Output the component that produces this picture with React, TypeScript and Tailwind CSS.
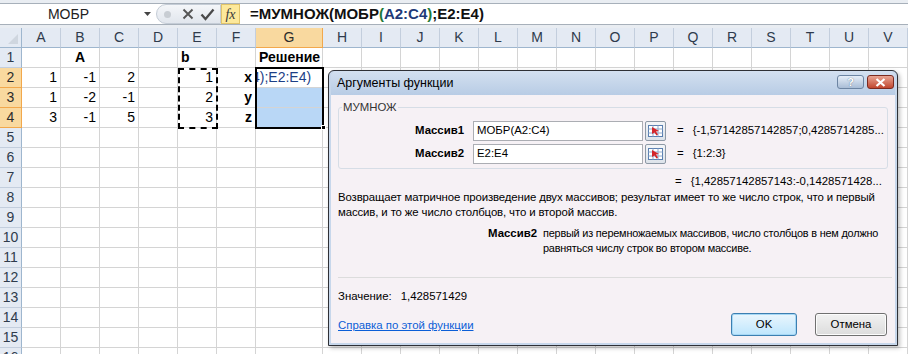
import React from "react";

type Cell = {
  text?: string;
  align?: "left" | "right" | "center";
  bold?: boolean;
  bg?: string;
};

const columns = ["A", "B", "C", "D", "E", "F", "G", "H", "I", "J", "K", "L", "M", "N", "O", "P", "Q", "R", "S", "T", "U", "V"];

// sheet contents
const cells: Record<string, Cell> = {
  B1: { text: "A", align: "center", bold: true },
  E1: { text: "b", align: "left", bold: true },
  G1: { text: "Решение", align: "left", bold: true },
  A2: { text: "1", align: "right" },
  B2: { text: "-1", align: "right" },
  C2: { text: "2", align: "right" },
  E2: { text: "1", align: "right" },
  F2: { text: "x", align: "right", bold: true },
  A3: { text: "1", align: "right" },
  B3: { text: "-2", align: "right" },
  C3: { text: "-1", align: "right" },
  E3: { text: "2", align: "right" },
  F3: { text: "y", align: "right", bold: true },
  G3: { bg: "bg-[#b9d7f6]" },
  A4: { text: "3", align: "right" },
  B4: { text: "-1", align: "right" },
  C4: { text: "5", align: "right" },
  E4: { text: "3", align: "right" },
  F4: { text: "z", align: "right", bold: true },
  G4: { bg: "bg-[#b9d7f6]" },
};

const rows = Array.from({ length: 17 }, (_, i) => i + 1);

const colWidth = (c: string) => (c === "G" ? "w-[67px]" : "w-[39px]");

const FormulaBar: React.FC = () => (
  <div className="h-[28px] bg-[#e9edf2] pt-[3px]">
    <div className="h-[22px] bg-white border-t border-b border-[#a7b0ba] flex items-center">
      <div className="w-[137px] shrink-0 text-center text-[14px] text-[#222]">МОБР</div>
      <svg width="8" height="5" viewBox="0 0 8 5" className="ml-[7px] shrink-0">
        <path d="M0 0h7L3.5 4z" fill="#444" />
      </svg>
      <div className="ml-[4px] h-[20px] w-[65px] shrink-0 flex items-center rounded-l-full bg-gradient-to-b from-[#f4f6f9] to-[#e1e6ed] border border-[#c4ccd6]">
        <div className="ml-[7px] w-[7px] h-[7px] rounded-full bg-[#c8cdd3]" />
        <svg width="12" height="12" viewBox="0 0 12 12" className="ml-[11px]">
          <path d="M1.5 1.5l9 9M10.5 1.5l-9 9" stroke="#555" strokeWidth="1.9" />
        </svg>
        <svg width="15" height="13" viewBox="0 0 15 13" className="ml-[6px]">
          <path d="M1.5 6.5l4 4.5L13.5 1.5" stroke="#4a4a4a" strokeWidth="2.3" fill="none" />
        </svg>
      </div>
      <div className="h-[20px] w-[19px] shrink-0 flex items-center justify-center bg-[#fde99b] border border-[#e1c46a] font-['Liberation_Serif',serif] italic text-[14px] text-[#3a3a3a]">
        fx
      </div>
      <div className="ml-[10px] text-[15px] font-bold text-[#111] whitespace-nowrap">
        =МУМНОЖ(МОБР<span className="text-[#1f7a37]">(</span>
        <span className="text-[#1f3a78]">A2:C4</span>
        <span className="text-[#1f7a37]">)</span>;E2:E4)
      </div>
    </div>
  </div>
);

const Sheet: React.FC = () => (
  <div className="relative">
    {/* column headers */}
    <div className="flex h-[20px]">
      <div className="w-[22px] h-[20px] bg-[#e4eaf3] border-r border-b border-[#9eb6ce] relative">
        <svg width="12" height="12" viewBox="0 0 12 12" className="absolute right-[2px] bottom-[2px]">
          <path d="M11 1v10H1z" fill="#cfd6df" />
        </svg>
      </div>
      {columns.map((c) => (
        <div
          key={c}
          className={`${colWidth(c)} h-[20px] flex items-center justify-center text-[14px] border-r border-b ${
            c === "G"
              ? "bg-[#f9d99f] border-[#f2a84c] text-[#2b2b2b]"
              : "bg-[#e4eaf3] border-[#c3cedd] border-b-[#9eb6ce] text-[#2f3b4c]"
          }`}
        >
          {c}
        </div>
      ))}
    </div>
    {rows.map((r) => (
      <div key={r} className="flex h-[20px]">
        <div
          className={`w-[22px] h-[20px] flex items-center justify-center text-[14px] border-r border-b ${
            r >= 2 && r <= 4
              ? "bg-[#f9d99f] border-[#f2a84c] text-[#2b2b2b]"
              : "bg-[#e4eaf3] border-[#c3cedd] border-r-[#9eb6ce] text-[#2f3b4c]"
          }`}
        >
          {r}
        </div>
        {columns.map((c) => {
          const cell = cells[`${c}${r}`];
          if (c === "G" && r === 2) {
            return (
              <div key={c} className={`${colWidth(c)} h-[20px] border-r border-b border-[#d4d4d4] overflow-hidden flex items-center`}>
                <span className="ml-[-4px] text-[14px] text-[#1d3f86] whitespace-nowrap">4);E2:E4)</span>
              </div>
            );
          }
          return (
            <div
              key={c}
              className={`${colWidth(c)} h-[20px] border-r border-b border-[#d4d4d4] flex items-center px-[3px] text-[14px] text-black whitespace-nowrap ${
                cell?.bg ?? "bg-white"
              } ${cell?.bold ? "font-bold" : ""} ${
                cell?.align === "right" ? "justify-end" : cell?.align === "center" ? "justify-center" : "justify-start"
              }`}
            >
              {cell?.text}
            </div>
          );
        })}
      </div>
    ))}

    {/* copied range E2:E4 */}
    <div className="absolute left-[178px] top-[40px] w-[40px] h-[61px] border-2 border-dashed border-black pointer-events-none" />
    {/* selection G2:G4 */}
    <div className="absolute left-[255px] top-[39px] w-[69px] h-[62px] border-2 border-black pointer-events-none" />
    <div className="absolute left-[321px] top-[97px] w-[5px] h-[5px] bg-black border border-white" />
  </div>
);

const RefButton: React.FC = () => (
  <div className="w-[21px] h-[20px] ml-[2px] shrink-0 border border-[#8e99a6] rounded-[2px] bg-gradient-to-b from-[#f3f5f8] to-[#dde3ea] flex items-center justify-center">
    <svg width="15" height="12" viewBox="0 0 15 12">
      <rect x="0.5" y="0.5" width="14" height="11" fill="#fff" stroke="#5b7fb0" />
      <path d="M0.5 4h14M0.5 8h14M5 0.5v11M10 0.5v11" stroke="#8fa9cc" strokeWidth="1" />
      <path d="M4 2l7 4-3 .5 2 3-1.5 1-2-3L4 9z" fill="#d4262b" />
    </svg>
  </div>
);

const Dialog: React.FC = () => (
  <div className="absolute left-[328px] top-[70px] w-[570px] h-[276px] border border-[#2e3036] rounded-t-[6px] bg-[#c7d7eb] p-[2px] pt-0 flex flex-col shadow-[2px_2px_4px_rgba(0,0,0,0.25)]">
    <div className="h-[24px] flex items-center justify-between rounded-t-[5px] bg-gradient-to-b from-[#d3e0f0] to-[#b8cce5]">
      <span className="ml-[6px] text-[12.5px] text-black">Аргументы функции</span>
      <div className="flex gap-[3px] mr-[1px] mt-[-2px]">
        <div className="w-[27px] h-[14px] rounded-[3px] border border-[#6d85a3] bg-gradient-to-b from-[#e6eef8] to-[#a9bdd6] flex items-center justify-center text-[11px] font-bold text-white leading-none [text-shadow:0_0_1px_#3d5573]">
          ?
        </div>
        <div className="w-[27px] h-[14px] rounded-[3px] border border-[#7b2a20] bg-gradient-to-b from-[#e8a493] to-[#c0452e] flex items-center justify-center">
          <svg width="11" height="9" viewBox="0 0 11 9">
            <path d="M1.5 1l8 7M9.5 1l-8 7" stroke="#fff" strokeWidth="2.2" />
          </svg>
        </div>
      </div>
    </div>
    <div className="flex-1 bg-[#f6f1f5] text-[11.4px] text-black px-[7px] pt-[12px]">
      {/* function group */}
      <div className="relative border border-[#d6dde6] rounded-[3px] h-[62px] pt-[13px]">
        <span className="absolute left-[3px] top-[-8px] px-[1px] bg-[#f6f1f5] text-[11.4px] text-[#333] leading-[14px]">МУМНОЖ</span>
        <div className="flex items-center h-[20px]">
          <span className="w-[125px] shrink-0 text-right font-bold">Массив1</span>
          <div className="ml-[9px] w-[170px] shrink-0 h-[20px] bg-white border border-[#abadb3] flex items-center px-[3px]">МОБР(A2:C4)</div>
          <RefButton />
          <span className="ml-[11px]">=</span>
          <span className="ml-[9px] whitespace-nowrap">{"{-1,57142857142857;0,4285714285..."}</span>
        </div>
        <div className="flex items-center h-[20px] mt-[3px]">
          <span className="w-[125px] shrink-0 text-right font-bold">Массив2</span>
          <div className="ml-[9px] w-[170px] shrink-0 h-[20px] bg-white border border-[#abadb3] flex items-center px-[3px]">E2:E4</div>
          <RefButton />
          <span className="ml-[11px]">=</span>
          <span className="ml-[9px]">{"{1:2:3}"}</span>
        </div>
      </div>
      <div className="flex h-[15px] leading-[15px] mt-[5px] ml-[337px] whitespace-nowrap">
        <span>=</span>
        <span className="ml-[9px]">{"{1,42857142857143:-0,1428571428..."}</span>
      </div>
      <div className="mt-[1px] leading-[15px] whitespace-nowrap tracking-[-0.12px]">
        <div>Возвращает матричное произведение двух массивов; результат имеет то же число строк, что и первый</div>
        <div>массив, и то же число столбцов, что и второй массив.</div>
      </div>
      <div className="flex mt-[6px] leading-[15px]">
        <span className="w-[199px] shrink-0 text-right font-bold">Массив2</span>
        <div className="ml-[6px] whitespace-nowrap text-[10.9px] tracking-[-0.2px]">
          <div>первый из перемножаемых массивов, число столбцов в нем должно</div>
          <div>равняться числу строк во втором массиве.</div>
        </div>
      </div>
      <div className="mt-[21px] border-t border-[#dcdcdc] w-[554px]" />
      <div className="mt-[11px] flex leading-[15px]">
        <span>Значение:</span>
        <span className="ml-[9px]">1,428571429</span>
      </div>
      <div className="flex items-start justify-between mt-[9px]">
        <span className="text-[#0b5ed7] underline leading-[15px] mt-[5px]">Справка по этой функции</span>
        <div className="flex gap-[18px] mr-[1px]">
          <div className="w-[66px] h-[23px] rounded-[3px] border border-[#3c7fb1] bg-gradient-to-b from-[#eaf6fd] to-[#bee6fd] shadow-[inset_0_0_0_1px_#a6d8f5] flex items-center justify-center">
            OK
          </div>
          <div className="w-[72px] h-[23px] rounded-[3px] border border-[#707070] bg-gradient-to-b from-[#f2f2f2] to-[#dcdcdc] shadow-[inset_0_0_0_1px_#fcfcfc] flex items-center justify-center">
            Отмена
          </div>
        </div>
      </div>
    </div>
  </div>
);

const App: React.FC = () => {
  return (
    <div className="relative w-[908px] h-[354px] overflow-hidden bg-white font-['Liberation_Sans',sans-serif]">
      <FormulaBar />
      <Sheet />
      <Dialog />
    </div>
  );
};

export default App;
